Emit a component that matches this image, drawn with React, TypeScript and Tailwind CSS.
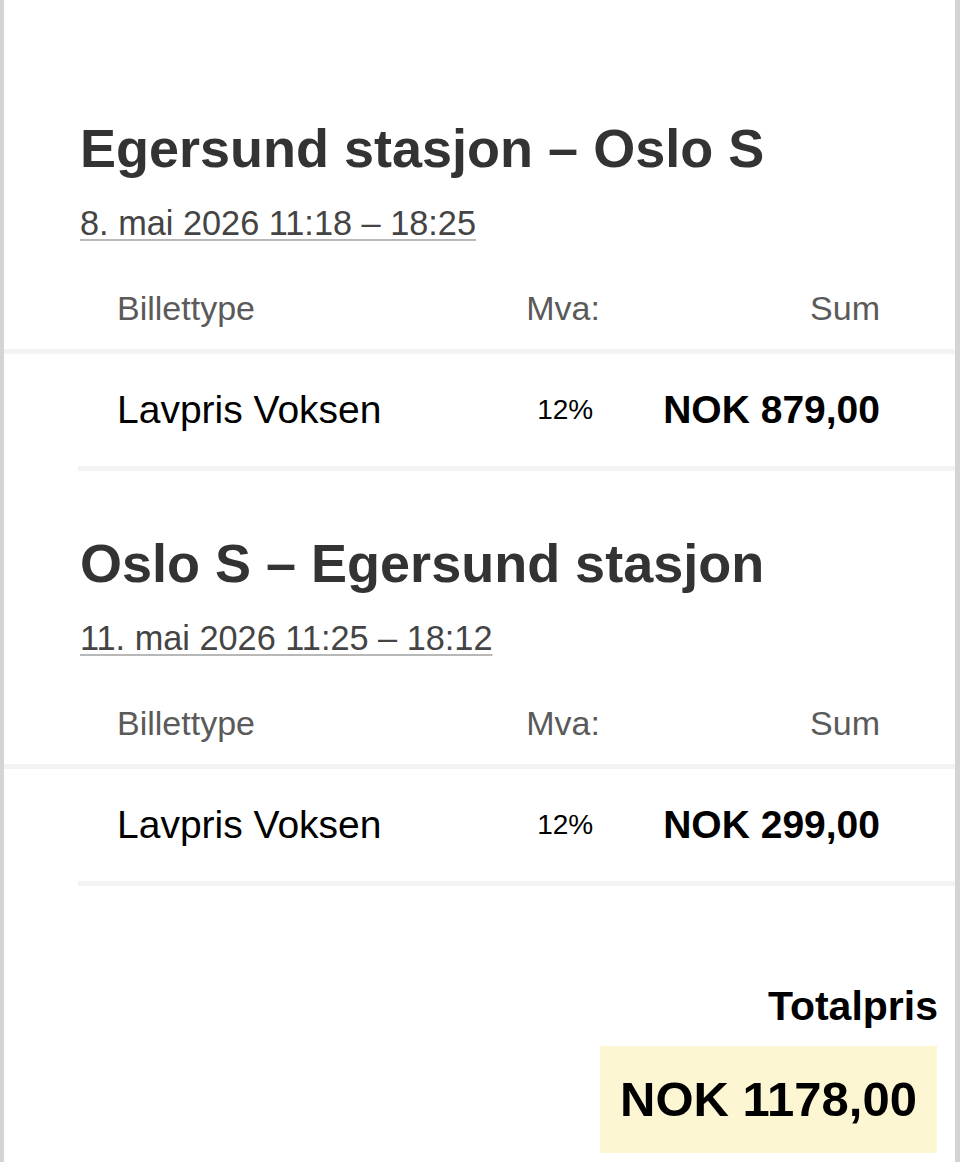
import React from "react";

type Trip = { title: string; date: string; type: string; vat: string; sum: string };

const trips: Trip[] = [
  { title: "Egersund stasjon – Oslo S", date: "8. mai 2026 11:18 – 18:25", type: "Lavpris Voksen", vat: "12%", sum: "NOK 879,00" },
  { title: "Oslo S – Egersund stasjon", date: "11. mai 2026 11:25 – 18:12", type: "Lavpris Voksen", vat: "12%", sum: "NOK 299,00" },
];

function TripSection({ trip, first }: { trip: Trip; first: boolean }) {
  return (
    <section className={first ? "pt-[116px] flex flex-col" : "pt-[60px] flex flex-col"}>
      <div className="pl-[76px] flex flex-col">
        <h2 className="text-[54px] leading-[64px] font-bold text-[#333333] tracking-normal">{trip.title}</h2>
        <div className="mt-[23px]">
          <span className="text-[34.3px] leading-[40px] text-[#444444] underline decoration-[#b8b8b8] decoration-2 underline-offset-[4px]">
            {trip.date}
          </span>
        </div>
      </div>
      <div className="mt-[45px] pb-[21px] pl-[113px] pr-[75px] flex items-center text-[34px] leading-[40px] text-[#5a5a5a] border-b-[5px] border-[#f3f3f3]">
        <span className="flex-1">Billettype</span>
        <span className="w-[74px] text-center mr-[210px]">Mva:</span>
        <span>Sum</span>
      </div>
      <div className="ml-[74px] pl-[39px] pr-[75px] py-[34px] flex items-center border-b-[5px] border-[#f3f3f3]">
        <span className="flex-1 text-[39px] leading-[44px] text-black">{trip.type}</span>
        <span className="text-[28px] leading-[44px] text-black mr-[70px]">{trip.vat}</span>
        <span className="text-[39px] leading-[44px] font-bold text-black">{trip.sum}</span>
      </div>
    </section>
  );
}

export default function App() {
  return (
    <div
      className="w-[960px] h-[1162px] flex bg-white overflow-hidden"
      style={{ fontFamily: '"Liberation Sans", Arial, Helvetica, sans-serif' }}
    >
      <div className="w-[4px] bg-[#d4d4d4]" />
      <main className="flex-1 flex flex-col">
        {trips.map((t, i) => (
          <TripSection key={i} trip={t} first={i === 0} />
        ))}
        <div className="mt-[96px] pr-[17px] flex flex-col items-end">
          <div className="text-[41px] leading-[48px] font-bold text-black">Totalpris</div>
          <div className="mt-[16px] mr-px w-[337px] h-[107px] pt-[25px] bg-[#fdf6d3] flex justify-center">
            <span className="text-[49px] leading-[57px] font-bold text-black">NOK 1178,00</span>
          </div>
        </div>
      </main>
      <div className="w-[5px] bg-[#d4d4d4]" />
    </div>
  );
}
